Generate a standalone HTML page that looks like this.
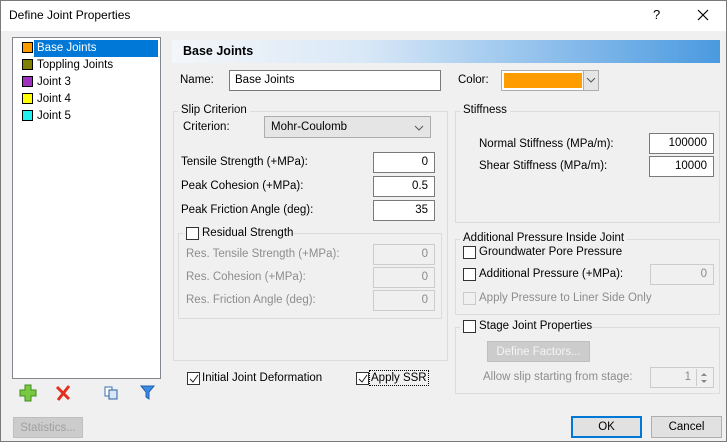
<!DOCTYPE html>
<html><head><style>
*{box-sizing:border-box;margin:0;padding:0}
body{width:727px;height:442px;overflow:hidden;background:#f0f0f0;font-family:"Liberation Sans",sans-serif;font-size:11.5px;color:#000;position:relative}
.a{position:absolute;white-space:nowrap}
.win{position:absolute;left:0;top:0;width:727px;height:442px;border:1px solid #7a7a7a}
.title{position:absolute;left:1px;top:1px;width:725px;height:30px;background:#fff}
.inp{position:absolute;background:#fff;border:1px solid #7a7a7a;height:21px;text-align:right;padding:3px 6px 0 0}
.dis{background:#f0f0f0;border-color:#ccc;color:#8a8a8a}
.grp{position:absolute;border:1px solid #dcdcdc}
.gl{position:absolute;background:#f0f0f0;padding:0 3px;top:-8px}
.cb{position:absolute;width:13px;height:13px;border:1px solid #333;background:#fff}
.gray{color:#8d8d8d}
.btn{position:absolute;border:1px solid #adadad;background:#e1e1e1;text-align:center;padding-top:4px;height:22px}
.sq{position:absolute;left:22px;width:11px;height:11px;border:1px solid #000}
</style></head><body>
<div class="win"></div>
<div class="title"></div>
<div class="a" style="left:9px;top:8px;font-size:12px">Define Joint Properties</div>
<div class="a" style="left:653px;top:7px;font-size:13px">?</div>
<svg class="a" style="left:697px;top:9px" width="12" height="12"><path d="M1 1L11 11M11 1L1 11" stroke="#000" stroke-width="1.2"/></svg>

<div class="a" style="left:12px;top:37px;width:149px;height:342px;background:#fff;border:1px solid #828790"></div>
<div class="a" style="left:34px;top:40px;width:124px;height:17px;background:#0078d7"></div>
<div class="sq" style="top:42px;background:#ff9900"></div>
<div class="a" style="left:37px;top:42px;color:#fff">Base Joints</div>
<div class="sq" style="top:59px;background:#808000"></div>
<div class="a" style="left:37px;top:59px">Toppling Joints</div>
<div class="sq" style="top:76px;background:#a030c0"></div>
<div class="a" style="left:37px;top:76px">Joint 3</div>
<div class="sq" style="top:93px;background:#ffff00"></div>
<div class="a" style="left:37px;top:93px">Joint 4</div>
<div class="sq" style="top:110px;background:#20f0f0"></div>
<div class="a" style="left:37px;top:110px">Joint 5</div>

<svg class="a" style="left:19px;top:384px" width="18" height="18"><path d="M6 1H12V6H17V12H12V17H6V12H1V6H6Z" fill="#7ac943" stroke="#3f8a1c"/></svg>
<svg class="a" style="left:55px;top:385px" width="16" height="16"><path d="M2 2L14 14M14 1L3 15" stroke="#e03020" stroke-width="3"/></svg>
<svg class="a" style="left:104px;top:386px" width="14" height="14"><rect x="1" y="1" width="7" height="9" fill="#fff" stroke="#3a6fb0"/><rect x="5" y="4" width="8" height="9" fill="#d8e6f6" stroke="#2a5fa0"/></svg>
<svg class="a" style="left:140px;top:385px" width="15" height="15"><path d="M1 1H14L9 7V14L6 12V7Z" fill="#3a8ae0" stroke="#1e5fae"/></svg>
<div class="btn" style="left:13px;top:417px;width:70px;height:21px;color:#a0a0a0;background:#cccccc;border-color:#bfbfbf">Statistics...</div>

<div class="a" style="left:172px;top:40px;width:548px;height:23px;background:linear-gradient(90deg,#f4f6f9 0%,#d9e8f7 35%,#4a9ae0 100%)"></div>
<div class="a" style="left:183px;top:44px;font-weight:bold;font-size:12.5px">Base Joints</div>

<div class="a" style="left:180px;top:74px">Name:</div>
<div class="inp" style="left:229px;top:70px;width:212px;text-align:left;padding-left:5px">Base Joints</div>
<div class="a" style="left:458px;top:74px">Color:</div>
<div class="a" style="left:501px;top:70px;width:98px;height:21px;border:1px solid #adadad;background:#fff"></div>
<div class="a" style="left:504px;top:73px;width:78px;height:15px;background:#ff9c00"></div>
<div class="a" style="left:583px;top:71px;width:15px;height:19px;background:#e5e5e5;border-left:1px solid #adadad"></div>
<svg class="a" style="left:586px;top:77px" width="10" height="6"><path d="M1 1L5 5L9 1" stroke="#555" fill="none"/></svg>

<div class="grp" style="left:173px;top:111px;width:275px;height:250px"><div class="gl" style="left:4px">Slip Criterion</div></div>
<div class="a" style="left:183px;top:121px">Criterion:</div>
<div class="a" style="left:264px;top:116px;width:167px;height:22px;background:#e5e5e5;border:1px solid #adadad;padding:4px 0 0 6px">Mohr-Coulomb</div>
<svg class="a" style="left:414px;top:125px" width="10" height="6"><path d="M1 1L5 5L9 1" stroke="#555" fill="none"/></svg>
<div class="a" style="left:181px;top:156px">Tensile Strength (+MPa):</div>
<div class="inp" style="left:373px;top:152px;width:62px">0</div>
<div class="a" style="left:181px;top:180px">Peak Cohesion (+MPa):</div>
<div class="inp" style="left:373px;top:176px;width:62px">0.5</div>
<div class="a" style="left:181px;top:204px">Peak Friction Angle (deg):</div>
<div class="inp" style="left:373px;top:200px;width:62px">35</div>

<div class="grp" style="left:178px;top:233px;width:264px;height:86px"></div>
<div class="a" style="left:183px;top:226px;width:110px;height:14px;background:#f0f0f0"></div>
<div class="cb" style="left:186px;top:227px"></div>
<div class="a" style="left:202px;top:227px">Residual Strength</div>
<div class="a gray" style="left:186px;top:248px">Res. Tensile Strength (+MPa):</div>
<div class="inp dis" style="left:373px;top:244px;width:62px">0</div>
<div class="a gray" style="left:186px;top:271px">Res. Cohesion (+MPa):</div>
<div class="inp dis" style="left:373px;top:267px;width:62px">0</div>
<div class="a gray" style="left:186px;top:294px">Res. Friction Angle (deg):</div>
<div class="inp dis" style="left:373px;top:290px;width:62px">0</div>

<div class="cb" style="left:187px;top:372px"></div>
<svg class="a" style="left:188px;top:373px" width="12" height="12"><path d="M2 6L5 9L10 2" stroke="#222" fill="none"/></svg>
<div class="a" style="left:202px;top:372px">Initial Joint Deformation</div>
<div class="cb" style="left:356px;top:372px"></div>
<svg class="a" style="left:357px;top:373px" width="12" height="12"><path d="M2 6L5 9L10 2" stroke="#222" fill="none"/></svg>
<div class="a" style="left:369px;top:370px;border:1px dotted #000;padding:1px 1px">Apply SSR</div>

<div class="grp" style="left:455px;top:111px;width:265px;height:112px"><div class="gl" style="left:4px">Stiffness</div></div>
<div class="a" style="left:479px;top:138px">Normal Stiffness (MPa/m):</div>
<div class="inp" style="left:649px;top:133px;width:65px">100000</div>
<div class="a" style="left:479px;top:160px">Shear Stiffness (MPa/m):</div>
<div class="inp" style="left:649px;top:156px;width:65px">10000</div>

<div class="grp" style="left:455px;top:239px;width:265px;height:76px"><div class="gl" style="left:4px">Additional Pressure Inside Joint</div></div>
<div class="cb" style="left:463px;top:246px"></div>
<div class="a" style="left:479px;top:246px">Groundwater Pore Pressure</div>
<div class="cb" style="left:463px;top:268px"></div>
<div class="a" style="left:479px;top:268px">Additional Pressure (+MPa):</div>
<div class="inp dis" style="left:650px;top:264px;width:64px">0</div>
<div class="cb" style="left:463px;top:292px;border-color:#ccc;background:#f0f0f0"></div>
<div class="a gray" style="left:479px;top:292px">Apply Pressure to Liner Side Only</div>

<div class="grp" style="left:455px;top:327px;width:265px;height:67px"></div>
<div class="a" style="left:460px;top:319px;width:130px;height:14px;background:#f0f0f0"></div>
<div class="cb" style="left:463px;top:320px"></div>
<div class="a" style="left:479px;top:320px">Stage Joint Properties</div>
<div class="btn" style="left:487px;top:341px;width:103px;height:21px;color:#f4f4f4;background:#cccccc;border-color:#bfbfbf">Define Factors...</div>
<div class="a gray" style="left:483px;top:371px">Allow slip starting from stage:</div>
<div class="inp dis" style="left:650px;top:367px;width:64px;padding-right:22px">1</div>
<div class="a" style="left:696px;top:369px;width:16px;height:17px;border-left:1px solid #ccc"></div>
<svg class="a" style="left:699px;top:371px" width="10" height="14"><path d="M2 5L5 2L8 5Z M2 9L5 12L8 9Z" fill="#888"/></svg>

<div class="btn" style="left:571px;top:416px;width:71px;border:2px solid #0078d7;padding-top:3px">OK</div>
<div class="btn" style="left:651px;top:416px;width:71px">Cancel</div>
</body></html>
